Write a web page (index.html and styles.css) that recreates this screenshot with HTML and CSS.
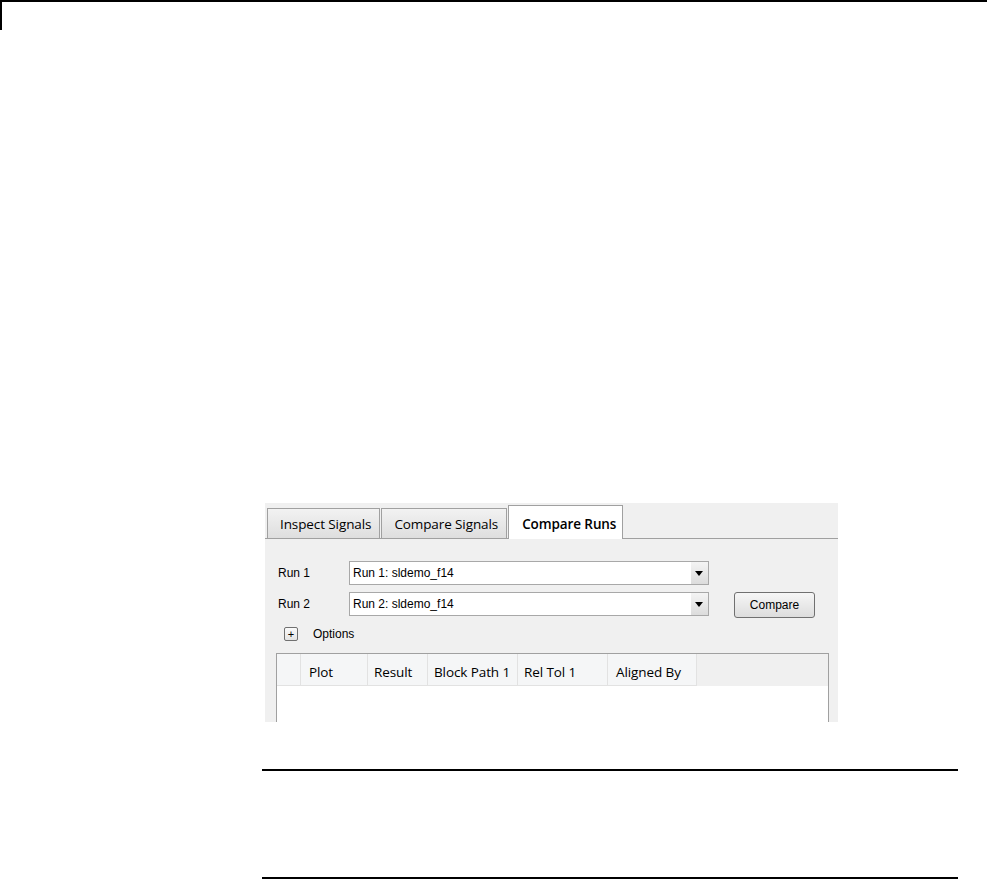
FILE: index.html
```html
<!DOCTYPE html>
<html>
<head>
<meta charset="utf-8">
<link rel="stylesheet" href="styles.css">
</head>
<body>
<div class="corner"></div>
<div class="figure">
  <div class="tabs">
    <div class="tab">Inspect Signals</div>
    <div class="tab">Compare Signals</div>
    <div class="tab active">Compare Runs</div>
  </div>
  <div class="body">
    <div class="runs">
      <div class="run-rows">
        <div class="row">
          <span class="label">Run 1</span>
          <div class="select"><span class="val">Run 1: sldemo_f14</span><span class="arrow"></span></div>
        </div>
        <div class="row">
          <span class="label">Run 2</span>
          <div class="select"><span class="val">Run 2: sldemo_f14</span><span class="arrow"></span></div>
        </div>
      </div>
      <button class="btn">Compare</button>
    </div>
    <div class="options"><span class="plus">+</span><span>Options</span></div>
    <div class="table">
      <div class="thead">
        <div class="th c0"></div>
        <div class="th c1">Plot</div>
        <div class="th c2">Result</div>
        <div class="th c3">Block Path 1</div>
        <div class="th c4">Rel Tol 1</div>
        <div class="th c5">Aligned By</div>
        <div class="th-rest"></div>
      </div>
    </div>
  </div>
</div>
<div class="rule first"></div>
<div class="rule second"></div>
</body>
</html>
```
FILE: styles.css
```css
html, body { margin: 0; padding: 0; background: #fff; }
body { width: 997px; height: 879px; overflow: hidden; }
.corner {
  width: 985px; height: 28px;
  border-top: 2px solid #000; border-left: 2px solid #000;
}
.figure {
  margin: 473px 0 0 265px;
  width: 573px; height: 219px;
  background: #f0f0f0;
  overflow: hidden;
  box-sizing: border-box;
}
.tabs {
  display: flex; align-items: flex-end;
  height: 35px; padding-left: 2px;
  border-bottom: 1px solid #a0a0a0;
  font-family: "Open Sans", "Noto Sans", sans-serif; font-size: 13.5px; color: #000;
  letter-spacing: -0.1px;
}
.tab {
  height: 30px; line-height: 31px;
  padding: 0 8px 0 12px;
  border: 1px solid #a0a0a0; border-bottom: none;
  background: linear-gradient(#f2f2f2, #dedede);
  margin-right: 1px;
  box-sizing: border-box;
}
.tab.active {
  line-height: 36px;
  background: #fff; font-weight: 600;
  margin-bottom: -1px; height: 34px;
  padding: 0 6px 0 13px;
}
.body { padding: 22px 0 0 11px; font-family: "Liberation Sans", Arial, sans-serif; font-size: 12px; }
.runs { display: flex; align-items: flex-end; }
.run-rows { display: flex; flex-direction: column; gap: 7px; }
.row { display: flex; align-items: center; height: 24px; }
.label { width: 71px; padding-left: 2px; }
.select {
  width: 360px; height: 24px; box-sizing: border-box;
  border: 1px solid #a8a8a8; background: #fff;
  display: flex; align-items: center; justify-content: space-between;
}
.val { padding-left: 3px; }
.arrow {
  width: 17px; height: 22px;
  background: linear-gradient(#f4f4f4, #dcdcdc);
  position: relative;
}
.arrow::after {
  content: ""; position: absolute; left: 4px; top: 9px;
  border-left: 4.5px solid transparent; border-right: 4.5px solid transparent;
  border-top: 5px solid #000;
}
.btn {
  margin-left: 25px; margin-bottom: -2px;
  width: 81px; height: 26px;
  border: 1px solid #707070; border-radius: 3px;
  background: linear-gradient(#f6f6f6, #dddddd);
  font-family: "Liberation Sans", Arial, sans-serif; font-size: 12px; color: #000;
  padding: 0;
}
.options { display: flex; align-items: center; gap: 15px; margin: 10px 0 0 8px; height: 16px; }
.plus {
  width: 14px; height: 14px; box-sizing: border-box;
  border: 1px solid #707070; border-radius: 2px;
  background: linear-gradient(#fafafa, #e4e4e4);
  font-size: 11px; line-height: 12px; text-align: center;
}
.table {
  margin-top: 11px; width: 553px; height: 80px;
  border: 1px solid #a0a0a0; background: #fff; box-sizing: border-box;
}
.thead {
  display: flex; height: 32px;
  font-family: "Open Sans", "Noto Sans", sans-serif; font-size: 13.5px;
  letter-spacing: -0.1px;
}
.th {
  background: #f5f6f7; border-right: 1px solid #e2e2e2; border-bottom: 1px solid #e2e2e2;
  line-height: 36px; padding-left: 8px; box-sizing: border-box; white-space: nowrap;
}
.c0 { width: 24px; }
.c1 { width: 67px; }
.c2 { width: 60px; padding-left: 6px; }
.c3 { width: 90px; padding-left: 6px; }
.c4 { width: 90px; padding-left: 6px; }
.c5 { width: 89px; }
.th-rest { flex: 1; background: #f0f0f0; }
.rule { margin-left: 262px; width: 696px; height: 2px; background: #000; }
.rule.first { margin-top: 47px; }
.rule.second { margin-top: 106px; }
```
